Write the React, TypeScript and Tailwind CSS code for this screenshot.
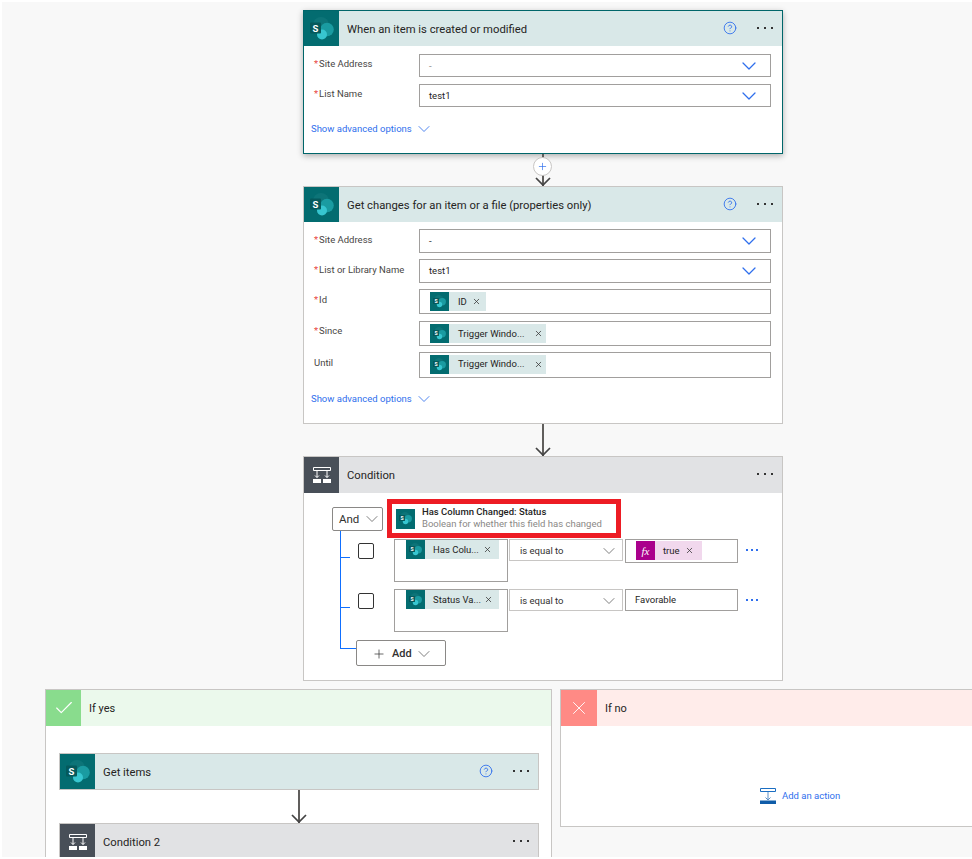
import React from "react"
import { ChevronDown, Plus, X, Check, CircleHelp } from "lucide-react"

const SharePointIcon = ({ size = 24 }: { size?: number }) => (
    <svg width={size} height={size} viewBox="0 0 24 24">
        <circle cx="11" cy="8" r="8" fill="#0d7478" />
        <circle cx="17" cy="12.5" r="6.8" fill="#1a9ba1" />
        <circle cx="12" cy="17.5" r="5" fill="#37c6d0" />
        <rect x="0" y="5.5" width="11" height="11" rx="1" fill="#05595c" />
        <text x="5.5" y="14.5" textAnchor="middle" fontSize="9.5" fontWeight="700" fill="#fff" fontFamily="Roboto, sans-serif">
            S
        </text>
    </svg>
)

const ConditionIcon = ({ size = 22 }: { size?: number }) => (
    <svg width={size} height={size} viewBox="0 0 22 22" fill="none" stroke="#fff" strokeWidth="1">
        <path d="M2.5 3.5h17v3h-17z" />
        <path d="M6 6.5v7M16 6.5v7M4 11.5l2 2 2-2M14 11.5l2 2 2-2" />
        <path d="M2 15h8v4H2zM12 15h8v4h-8z" fill="#fff" stroke="none" />
    </svg>
)

const AddActionIcon = () => (
    <svg width="16" height="16" viewBox="0 0 16 16" fill="none">
        <path d="M.5.5h15v3H.5z" stroke="#1b6ec2" />
        <path d="M8 4v8M5.5 9.5 8 12l2.5-2.5" stroke="#5b8fc7" />
        <path d="M0 12.5h16V16H0z" fill="#0f5ca8" />
    </svg>
)

const FxIcon = () => (
    <span className="flex h-[19px] w-[19px] shrink-0 items-center justify-center bg-[#aa008c] font-['Liberation_Serif',serif] text-[11px] italic text-white">
        fx
    </span>
)

// the "..." menus are wider apart than any icon package draws them
const Dots = ({ blue = false }: { blue?: boolean }) => (
    <span className={`flex items-center ${blue ? "gap-[3px]" : "gap-[5px]"}`}>
        <span className={`h-[2px] w-[2px] ${blue ? "bg-[#2f6fed]" : "bg-[#333]"}`} />
        <span className={`h-[2px] w-[2px] ${blue ? "bg-[#2f6fed]" : "bg-[#333]"}`} />
        <span className={`h-[2px] w-[2px] ${blue ? "bg-[#2f6fed]" : "bg-[#333]"}`} />
    </span>
)

const Token = ({
    label,
    textClass = "ml-[9px]",
    xClass = "ml-[5px] mr-[5px]",
}: {
    label: string
    textClass?: string
    xClass?: string
}) => (
    <span className="flex h-[19px] items-center bg-[#d9e8e8]">
        <span className="flex h-[19px] w-[19px] shrink-0 items-center justify-center bg-[#036c70]">
            <SharePointIcon size={13} />
        </span>
        <span className={`whitespace-nowrap text-[#252423] ${textClass}`}>{label}</span>
        <X className={`${xClass} h-[9px] w-[9px] shrink-0`} strokeWidth={2} color="#333" />
    </span>
)

const CardHeader = ({
    title,
    kind = "sp",
    help = true,
    h = "h-[35px]",
}: {
    title: string
    kind?: "sp" | "cond"
    help?: boolean
    h?: string
}) => (
    <div className={`flex items-center ${h} ${kind === "sp" ? "bg-[#d9e8e8]" : "bg-[#e1e2e4]"}`}>
        <div className={`flex h-full w-[35px] shrink-0 items-center justify-center ${kind === "sp" ? "bg-[#036c70]" : "bg-[#484f58]"}`}>
            {kind === "sp" ? <SharePointIcon /> : <ConditionIcon />}
        </div>
        <span className="ml-[8px] flex-1 pt-[2px] text-[11.25px] text-[#252423]">{title}</span>
        {help && <CircleHelp className="mb-[2px] mr-[20px] h-[14px] w-[14px]" strokeWidth={1.5} color="#2f6fed" />}
        <span className="mb-[2px] mr-[9px]">
            <Dots />
        </span>
    </div>
)

const Field = ({
    label,
    required = true,
    chevron = false,
    h = "h-[24px]",
    mb = "mb-[6px]",
    labelPt = "pt-[4px]",
    children,
}: {
    label: string
    required?: boolean
    chevron?: boolean
    h?: string
    mb?: string
    labelPt?: string
    children?: React.ReactNode
}) => (
    <div className={`flex ${mb}`}>
        <div className={`w-[115px] whitespace-nowrap pl-[10px] ${labelPt} text-[#484644]`}>
            {required ? <span className="mr-[1px] text-[#e8483f]">*</span> : null}
            {label}
        </div>
        <div className={`flex ${h} w-[352px] items-center border border-[#a19f9d] bg-white pl-[9px] pr-[9px] text-[#252423]`}>
            <div className="flex-1">{children}</div>
            {chevron && <ChevronDown className="h-[24px] w-[24px] shrink-0" strokeWidth={1.25} color="#2f6fed" />}
        </div>
    </div>
)

const AdvancedLink = () => (
    <div className="flex h-[14px] items-center pl-[7px] text-[#2f6fed]">
        Show advanced options
        <ChevronDown className="ml-[2px] h-[20px] w-[20px]" strokeWidth={1} color="#2f6fed" />
    </div>
)

const Arrow = ({ h }: { h: string }) => (
    <div className={`flex ${h} flex-col items-center`}>
        <div className="w-[2px] flex-1 bg-[#605e5c]" />
        <svg className="-mt-[9px] block" width="16" height="9" viewBox="0 0 16 9" fill="none">
            <path d="M1 1l7 7 7-7" stroke="#444" strokeWidth="1.75" />
        </svg>
    </div>
)

const CondSelect = ({ label }: { label: string }) => (
    <div className="flex h-[22px] w-[114px] shrink-0 items-center justify-between border border-[#c8c6c4] pl-[10px] pr-[3px] pt-[1px] text-[#323130]">
        {label}
        <ChevronDown className="h-[20px] w-[20px]" strokeWidth={1} color="#666" />
    </div>
)

const CondRow = ({ token, inputH, value }: { token: string; inputH: string; value: React.ReactNode }) => (
    <div className="mb-[7px] flex items-start">
        <div className="mt-[18px] h-[1px] w-[9px] border-t border-[#0f6fff]" />
        <div className="ml-[8px] mt-[4px] h-[16px] w-[16px] shrink-0 rounded-[2px] border border-[#333]" />
        <div className="ml-[20px] h-[43px] w-[114px] shrink-0 border border-[#a19f9d] pl-[11px] pr-[8px]">
            <Token label={token} textClass="ml-[8px] w-[47px]" xClass="ml-[4px] mr-[7px]" />
        </div>
        <div className="ml-[1px]">
            <CondSelect label="is equal to" />
        </div>
        <div className={`ml-[2px] ${inputH} w-[113px] shrink-0 border border-[#a19f9d]`}>{value}</div>
        <span className="ml-[8px] mt-[10px]">
            <Dots blue />
        </span>
    </div>
)

export default function App() {
    return (
        <div className="h-[859px] w-[972px] overflow-hidden bg-white pl-[2px] pt-[2px] font-['Roboto',sans-serif] text-[9.5px] leading-[14px]">
            <div className="h-[855px] w-[970px] overflow-hidden bg-[#f8f8f8] pt-[8px]">
                <div className="ml-[301px] w-[480px]">
                    {/* Trigger */}
                    <div className="h-[144px] border border-[#00666a] bg-white shadow-[0_2px_6px_rgba(0,0,0,0.3)]">
                        <CardHeader title="When an item is created or modified" />
                        <div className="pt-[8px]">
                            <Field label="Site Address" chevron h="h-[23px]" mb="mb-[7px]" labelPt="pt-[3px]">
                                <span className="text-[#8a8886]">-</span>
                            </Field>
                            <Field label="List Name" chevron h="h-[23px]" mb="mb-[15px]" labelPt="pt-[3px]">
                                test1
                            </Field>
                            <AdvancedLink />
                        </div>
                    </div>

                    {/* Connector with plus */}
                    <div className="relative h-[32px]">
                        <Arrow h="h-[32px]" />
                        <div className="absolute left-[230px] top-[3px] flex h-[19px] w-[19px] items-center justify-center rounded-full border border-[#c8c6c4] bg-white">
                            <Plus className="h-[11px] w-[11px]" strokeWidth={1.5} color="#2f6fed" />
                        </div>
                    </div>

                    {/* Get changes */}
                    <div className="h-[238px] border border-[#c8c6c4] bg-white">
                        <CardHeader title="Get changes for an item or a file (properties only)" />
                        <div className="pt-[7px]">
                            <Field label="Site Address" chevron>
                                -
                            </Field>
                            <Field label="List or Library Name" chevron>
                                test1
                            </Field>
                            <Field label="Id" h="h-[25px]" mb="mb-[7px]">
                                <span className="ml-[1px] flex">
                                    <span className="flex">
                                        <Token label="ID" />
                                    </span>
                                </span>
                            </Field>
                            <Field label="Since" h="h-[25px]" mb="mb-[6px]" labelPt="pt-[3px]">
                                <span className="ml-[1px] flex">
                                    <span className="flex">
                                        <Token label="Trigger Windo..." textClass="ml-[9px] w-[70px]" xClass="ml-[6px] mr-[3px]" />
                                    </span>
                                </span>
                            </Field>
                            <Field label="Until" required={false} h="h-[26px]" mb="mb-[14px]">
                                <span className="ml-[1px] -mt-[2px] flex">
                                    <span className="flex">
                                        <Token label="Trigger Windo..." textClass="ml-[9px] w-[70px]" xClass="ml-[6px] mr-[3px]" />
                                    </span>
                                </span>
                            </Field>
                            <AdvancedLink />
                        </div>
                    </div>

                    <Arrow h="h-[32px]" />

                    {/* Condition */}
                    <div className="h-[225px] border border-[#c8c6c4] bg-white">
                        <CardHeader title="Condition" kind="cond" help={false} h="h-[36px]" />
                        <div className="pl-[28px] pt-[6px]">
                            <div className="flex items-start">
                                <div className="mt-[8px] flex h-[24px] w-[51px] items-center justify-between rounded-[2px] border border-[#8a8886] bg-white pl-[6px] text-[11.5px] text-[#323130]">
                                    And
                                    <ChevronDown className="h-[20px] w-[20px]" strokeWidth={1} color="#666" />
                                </div>
                                <div className="ml-[4px] flex h-[39px] w-[234px] items-center border-[5px] border-[#ed1c24] bg-white pl-[4px]">
                                    <span className="flex h-[20px] w-[19px] items-center justify-center bg-[#036c70]">
                                        <SharePointIcon size={13} />
                                    </span>
                                    <div className="ml-[7px] -mt-[1px] text-[9.5px] leading-[12px]">
                                        <div className="font-medium text-[#252423]">Has Column Changed: Status</div>
                                        <div className="text-[#8a8886]">Boolean for whether this field has changed</div>
                                    </div>
                                </div>
                            </div>

                            <div className="ml-[8px] -mt-[7px]">
                                <div className="border-l border-[#0f6fff] pt-[8px]">
                                    <CondRow
                                        token="Has Colu..."
                                        inputH="h-[24px]"
                                        value={
                                            <span className="ml-[10px] mt-[1px] inline-flex h-[19px] items-center bg-[#f1d8ed]">
                                                <FxIcon />
                                                <span className="ml-[8px] text-[#252423]">true</span>
                                                <X className="ml-[5px] mr-[8px] h-[9px] w-[9px]" strokeWidth={2} color="#333" />
                                            </span>
                                        }
                                    />
                                    <CondRow
                                        token="Status Va..."
                                        inputH="h-[22px]"
                                        value={<div className="pl-[9px] pt-[3px] text-[#252423]">Favorable</div>}
                                    />
                                    <div className="h-[1px]" />
                                </div>
                                <div className="flex items-start">
                                    <div className="h-[9px] w-[16px] border-b border-l border-[#0f6fff]" />
                                    <div className="flex h-[26px] w-[90px] items-center rounded-[2px] border border-[#8a8886] bg-white pl-[15px] pt-[1px] text-[11px] font-medium text-[#323130]">
                                        <Plus className="h-[14px] w-[14px]" strokeWidth={1.25} color="#333" />
                                        <span className="ml-[6px]">Add</span>
                                        <ChevronDown className="ml-[2px] h-[20px] w-[20px]" strokeWidth={1} color="#666" />
                                    </div>
                                </div>
                            </div>
                        </div>
                    </div>
                </div>

                {/* Branches */}
                <div className="ml-[43px] mt-[8px] flex w-[1100px] items-start">
                    <div className="h-[300px] w-[507px] shrink-0 border border-[#c8c6c4] bg-white">
                        <div className="flex h-[36px] items-center bg-[#ebf9ec]">
                            <div className="flex h-full w-[35px] items-center justify-center bg-[#89dc8d]">
                                <Check className="h-[22px] w-[22px]" strokeWidth={1.25} color="#fff" />
                            </div>
                            <span className="ml-[8px] pt-[1px] text-[11px] text-[#252423]">If yes</span>
                        </div>
                        <div className="ml-[13px] mt-[27px] w-[480px]">
                            <div className="border border-[#c8c6c4]">
                                <CardHeader title="Get items" />
                            </div>
                            <Arrow h="h-[33px]" />
                            <div className="border border-[#c8c6c4]">
                                <CardHeader title="Condition 2" kind="cond" help={false} />
                            </div>
                        </div>
                    </div>
                    <div className="ml-[8px] h-[138px] w-[500px] shrink-0 border border-[#c8c6c4] bg-white">
                        <div className="flex h-[36px] items-center bg-[#ffecea]">
                            <div className="flex h-full w-[36px] items-center justify-center bg-[#ff8a85]">
                                <X className="h-[22px] w-[22px]" strokeWidth={1} color="#fff" />
                            </div>
                            <span className="ml-[8px] pt-[1px] text-[11px] text-[#252423]">If no</span>
                        </div>
                        <div className="ml-[199px] mt-[62px] flex items-center text-[#2f6fed]">
                            <AddActionIcon />
                            <span className="ml-[6px]">Add an action</span>
                        </div>
                    </div>
                </div>
            </div>
        </div>
    )
}
